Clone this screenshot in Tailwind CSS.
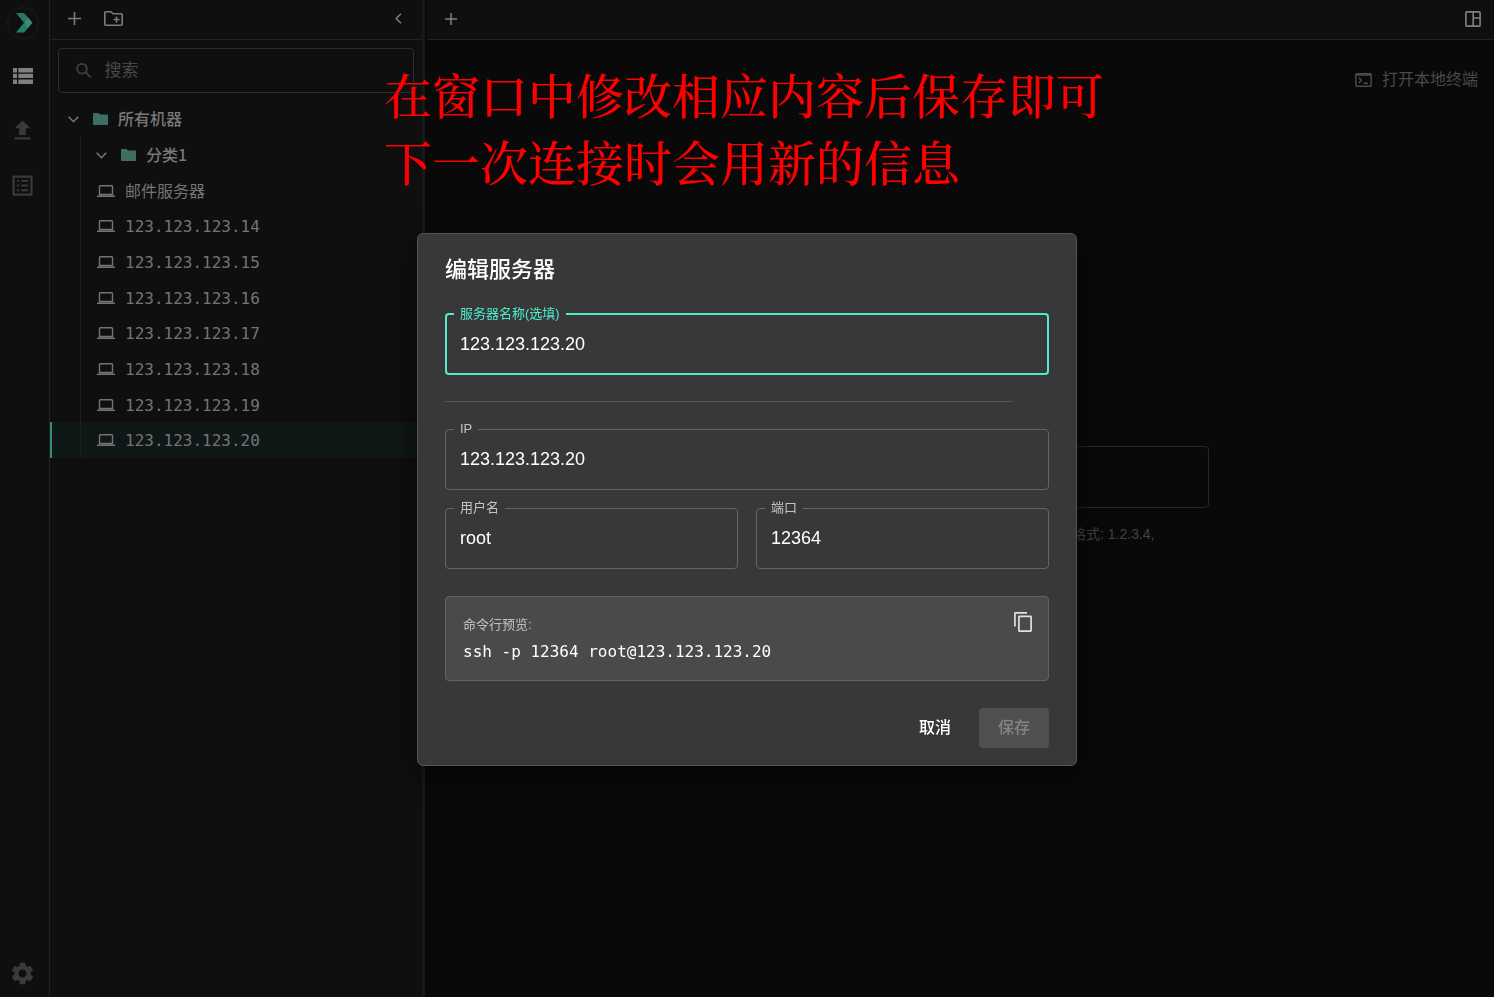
<!DOCTYPE html>
<html lang="zh-CN">
<head>
    <meta charset="UTF-8">
    <meta name="viewport" content="width=device-width, initial-scale=1.0">
    <title>编辑服务器</title>
    <script src="https://cdn.jsdelivr.net/npm/@tailwindcss/browser@4"></script>
</head>
<body class="flex h-screen overflow-hidden bg-[#090909] font-['Liberation_Sans','Noto_Sans_CJK_SC',sans-serif] text-[#787878]">

    <!-- Icon rail -->
    <nav class="flex w-[50px] shrink-0 flex-col items-center border-r border-[#222222] bg-[#0f0f0f] pt-[7px] pb-[10px] pr-1">
        <a href="#" aria-label="主页" class="flex size-8 items-center justify-center rounded-full border border-[#1c1c1c] pl-[3px]">
            <svg class="h-5 w-[18px]" viewBox="0 0 18 20">
                <path d="M1 0h8l4.500 5L9 9.700z" fill="#2c7562"/>
                <path d="M1 19.500h8l4.500-5L9 9.700z" fill="#237f61"/>
                <path d="M13 4.500 17.500 9.700 13 15 9 9.700z" fill="#3d8b77"/>
            </svg>
        </a>
        <button aria-label="服务器列表" class="mt-[23px] flex size-[27px] items-center justify-center text-[#808080]">
            <svg class="h-4 w-5" viewBox="0 0 20 16" fill="currentColor">
                <path d="M0 0h4v4.400H0zM5.300 0H20v4.400H5.300zM0 5.800h4v4.200H0zM5.300 5.800H20V10H5.300zM0 11.500h4V16H0zM5.300 11.500H20V16H5.300z"/>
            </svg>
        </button>
        <button aria-label="上传" class="mt-[28px] text-[#3a3a3a]">
            <svg class="size-[27px]" viewBox="0 0 24 24" fill="currentColor"><path d="M9 16h6v-6h4l-7-7-7 7h4zm-4 2h14v2H5z"/></svg>
        </button>
        <button aria-label="日志" class="mt-[28px] text-[#3a3a3a]">
            <svg class="size-[27px]" viewBox="0 0 24 24" fill="currentColor"><path d="M19 5v14H5V5h14m1.100-2H3.900c-.5 0-.9.4-.9.9v16.200c0 .4.4.9.9.9h16.200c.4 0 .9-.5.9-.9V3.900c0-.5-.5-.9-.9-.9zM11 7h6v1.700h-6zm0 4.200h6v1.700h-6zm0 4.200h6v1.700h-6zM7 7h2v1.700H7zm0 4.200h2v1.700H7zm0 4.200h2v1.700H7z"/></svg>
        </button>
        <button aria-label="设置" class="mt-auto text-[#3a3a3a]">
            <svg class="size-[27px]" viewBox="0 0 24 24" fill="currentColor"><path d="M19.140 12.940c.04-.3.06-.61.06-.94 0-.32-.02-.64-.07-.94l2.030-1.580c.18-.14.23-.41.12-.61l-1.920-3.320c-.12-.22-.37-.29-.59-.22l-2.390.96c-.5-.38-1.030-.7-1.620-.94l-.36-2.540c-.04-.24-.24-.41-.48-.41h-3.840c-.24 0-.43.17-.47.41l-.36 2.540c-.59.24-1.130.57-1.620.94l-2.390-.96c-.22-.08-.47 0-.59.22L2.740 8.870c-.12.21-.08.47.12.61l2.030 1.580c-.05.3-.09.63-.09.94s.02.64.07.94l-2.030 1.580c-.18.14-.23.41-.12.61l1.920 3.320c.12.22.37.29.59.22l2.390-.96c.5.38 1.030.7 1.620.94l.36 2.540c.05.24.24.41.48.41h3.840c.24 0 .44-.17.47-.41l.36-2.540c.59-.24 1.130-.56 1.620-.94l2.390.96c.22.08.47 0 .59-.22l1.920-3.320c.12-.22.07-.47-.12-.61l-2.010-1.580zM12 15.600c-1.980 0-3.600-1.620-3.600-3.600s1.620-3.600 3.600-3.600 3.600 1.620 3.600 3.600-1.620 3.600-3.600 3.600z"/></svg>
        </button>
    </nav>

    <!-- Server tree -->
    <aside class="flex w-[375px] shrink-0 flex-col border-r-[3px] border-[#191919] bg-[#0f0f0f]">
        <header class="flex h-10 items-center border-b border-[#222222] px-4 pb-[2px] text-[#7c7c7c]">
            <button aria-label="新建服务器" class="flex w-4 justify-center">
                <svg class="size-[13px]" viewBox="0 0 13 13" stroke="currentColor" stroke-width="1.600"><path d="M6.500 0v13M0 6.500h13"/></svg>
            </button>
            <button aria-label="新建分类" class="ml-[22px]">
                <svg class="h-[15px] w-[19px]" viewBox="0 0 19 15" fill="none" stroke="currentColor" stroke-width="1.600"><path d="M.8 1.800q0-1 1-1H7l2 2h8.200q1 0 1 1v9.400q0 1-1 1H1.800q-1 0-1-1zM12.500 5.500v6M9.500 8.500h6"/></svg>
            </button>
            <button aria-label="收起" class="ml-auto flex w-4 justify-center">
                <svg class="h-[11px] w-[7px]" viewBox="0 0 7 11" fill="none" stroke="currentColor" stroke-width="1.500"><path d="M6 .8 1.200 5.500 6 10.200"/></svg>
            </button>
        </header>

        <label class="mx-2 mt-2 flex h-[45px] items-center gap-[13px] rounded border border-[#2c2c2c] pl-[17px] text-[#404040]">
            <svg class="size-[17px]" viewBox="0 0 17 17" fill="none" stroke="currentColor" stroke-width="2"><circle cx="6.500" cy="6.500" r="5.300"/><path d="m10.300 10.300 5.700 5.700"/></svg>
            <input type="search" placeholder="搜索" aria-label="搜索" class="w-full min-w-0 bg-transparent text-[17px] outline-none placeholder:text-[#484848]">
        </label>

        <div class="mt-2 text-base">
            <div class="flex h-9 items-center pl-[18px] font-medium">
                <svg class="h-[7px] w-[11px]" viewBox="0 0 11 7" fill="none" stroke="currentColor" stroke-width="1.500"><path d="m.7.7 4.800 5 4.800-5"/></svg>
                <svg class="ml-[14px] h-3 w-[15px] text-[#3f6f64]" viewBox="0 0 15 12" fill="currentColor"><path d="M0 1q0-1 1-1h4.500l1.500 1.500h7q1 0 1 1V11q0 1-1 1H1q-1 0-1-1z"/></svg>
                <span class="ml-[10px] pb-[2px] font-['Noto_Sans_CJK_SC',sans-serif]">所有机器</span>
            </div>
            <div class="relative before:absolute before:inset-y-0 before:left-[30px] before:w-px before:bg-[#1e1e1e]">
                <div class="flex h-9 items-center pl-[46px] font-medium">
                    <svg class="h-[7px] w-[11px]" viewBox="0 0 11 7" fill="none" stroke="currentColor" stroke-width="1.500"><path d="m.7.7 4.800 5 4.800-5"/></svg>
                    <svg class="ml-[14px] h-3 w-[15px] text-[#3f6f64]" viewBox="0 0 15 12" fill="currentColor"><path d="M0 1q0-1 1-1h4.500l1.500 1.500h7q1 0 1 1V11q0 1-1 1H1q-1 0-1-1z"/></svg>
                    <span class="ml-[10px] pb-[2px] font-['Noto_Sans_CJK_SC',sans-serif]">分类1</span>
                </div>
                <ul class="grid h-[285px] auto-rows-fr font-['DejaVu_Sans_Mono','Noto_Sans_CJK_SC',monospace] text-[#747474]">
                    <li class="flex items-center gap-[10px] border-l-2 border-transparent pl-[45px]">
                        <svg class="h-3 w-[18px] shrink-0" viewBox="0 0 18 12" fill="none" stroke="currentColor" stroke-width="1.400"><path d="M2.500 9.500v-8q0-.8.8-.8h11.400q.8 0 .8.8v8zM0 11.300h18"/></svg>
                        <span class="pt-[2px]">邮件服务器</span>
                    </li>
                    <li class="flex items-center gap-[10px] border-l-2 border-transparent pl-[45px]">
                        <svg class="h-3 w-[18px] shrink-0" viewBox="0 0 18 12" fill="none" stroke="currentColor" stroke-width="1.400"><path d="M2.500 9.500v-8q0-.8.8-.8h11.400q.8 0 .8.8v8zM0 11.300h18"/></svg>
                        <span class="pt-[2px]">123.123.123.14</span>
                    </li>
                    <li class="flex items-center gap-[10px] border-l-2 border-transparent pl-[45px]">
                        <svg class="h-3 w-[18px] shrink-0" viewBox="0 0 18 12" fill="none" stroke="currentColor" stroke-width="1.400"><path d="M2.500 9.500v-8q0-.8.8-.8h11.400q.8 0 .8.8v8zM0 11.300h18"/></svg>
                        <span class="pt-[2px]">123.123.123.15</span>
                    </li>
                    <li class="flex items-center gap-[10px] border-l-2 border-transparent pl-[45px]">
                        <svg class="h-3 w-[18px] shrink-0" viewBox="0 0 18 12" fill="none" stroke="currentColor" stroke-width="1.400"><path d="M2.500 9.500v-8q0-.8.8-.8h11.400q.8 0 .8.8v8zM0 11.300h18"/></svg>
                        <span class="pt-[2px]">123.123.123.16</span>
                    </li>
                    <li class="flex items-center gap-[10px] border-l-2 border-transparent pl-[45px]">
                        <svg class="h-3 w-[18px] shrink-0" viewBox="0 0 18 12" fill="none" stroke="currentColor" stroke-width="1.400"><path d="M2.500 9.500v-8q0-.8.8-.8h11.400q.8 0 .8.8v8zM0 11.300h18"/></svg>
                        <span class="pt-[2px]">123.123.123.17</span>
                    </li>
                    <li class="flex items-center gap-[10px] border-l-2 border-transparent pl-[45px]">
                        <svg class="h-3 w-[18px] shrink-0" viewBox="0 0 18 12" fill="none" stroke="currentColor" stroke-width="1.400"><path d="M2.500 9.500v-8q0-.8.8-.8h11.400q.8 0 .8.8v8zM0 11.300h18"/></svg>
                        <span class="pt-[2px]">123.123.123.18</span>
                    </li>
                    <li class="flex items-center gap-[10px] border-l-2 border-transparent pl-[45px]">
                        <svg class="h-3 w-[18px] shrink-0" viewBox="0 0 18 12" fill="none" stroke="currentColor" stroke-width="1.400"><path d="M2.500 9.500v-8q0-.8.8-.8h11.400q.8 0 .8.8v8zM0 11.300h18"/></svg>
                        <span class="pt-[2px]">123.123.123.19</span>
                    </li>
                    <li class="flex items-center gap-[10px] border-l-2 border-[#2f8d76] bg-[#101717] pl-[45px]">
                        <svg class="h-3 w-[18px] shrink-0" viewBox="0 0 18 12" fill="none" stroke="currentColor" stroke-width="1.400"><path d="M2.500 9.500v-8q0-.8.8-.8h11.400q.8 0 .8.8v8zM0 11.300h18"/></svg>
                        <span class="pt-[2px]">123.123.123.20</span>
                    </li>
                </ul>
            </div>
        </div>
    </aside>

    <!-- Main area -->
    <main class="flex min-w-0 grow flex-col">
        <header class="ml-[2px] flex h-10 shrink-0 items-center justify-between border-b border-[#222222] bg-[#0f0f0f] pr-[13px] pb-[2px] pl-[18px] text-[#808080]">
            <button aria-label="新建标签">
                <svg class="size-3" viewBox="0 0 12 12" stroke="currentColor" stroke-width="1.500"><path d="M6 0v12M0 6h12"/></svg>
            </button>
            <button aria-label="布局">
                <svg class="size-4" viewBox="0 0 16 16" fill="none" stroke="currentColor" stroke-width="1.600"><path d="M1.800.9h12.400q.9 0 .9.900v12.400q0 .9-.9.900H1.800q-.9 0-.9-.9V1.800q0-.9.9-.9zM8.200.9v14.200M8.200 7h6.900"/></svg>
            </button>
        </header>
        <button class="mt-[28px] mr-4 flex h-6 items-center gap-[10px] self-end text-base text-[#4a4a4a]">
            <svg class="h-[14px] w-[17px]" viewBox="0 0 17 14" fill="none" stroke="currentColor" stroke-width="1.500"><path d="M1.800.8h13.400q1 0 1 1v10.400q0 1-1 1H1.800q-1 0-1-1V1.800q0-1 1-1zM.8 2h15.400M3.800 4.700l2.600 2.600-2.600 2.600M8.500 10.200h4.500"/></svg>
            打开本地终端
        </button>
        <div class="mt-[354px] w-[498px] self-center">
            <input type="text" aria-label="服务器地址" class="h-[62px] w-full rounded border border-[#272727] bg-transparent px-4 text-lg">
            <p class="mt-4 pr-[54px] text-right text-sm text-[#424242]">格式: 1.2.3.4,</p>
        </div>
    </main>

    <!-- Edit dialog -->
    <div class="fixed inset-0 flex items-center justify-center pt-[2px]">
        <form role="dialog" aria-labelledby="dialogTitle" class="w-[660px] rounded-md border border-[#555555] bg-[#383838] px-[27px] pt-5 pb-[17px] text-white shadow-[0_10px_30px_rgba(0,0,0,0.6)]">
            <h1 id="dialogTitle" class="text-[22px] leading-8 font-medium">编辑服务器</h1>

            <fieldset class="mt-[19px] rounded border-2 border-[#50ecd0] pb-2">
                <legend class="ml-[7px] px-[6px] text-[13px] leading-[18px] text-[#50ecd0]"><label for="serverName">服务器名称(选填)</label></legend>
                <input id="serverName" type="text" value="123.123.123.20" class="block h-[42px] w-full bg-transparent px-[13px] text-lg outline-none">
            </fieldset>

            <hr class="mt-[26px] mr-9 border-[#555555]">

            <fieldset class="mt-[18px] rounded border border-[#646464] pb-[9px]">
                <legend class="ml-2 px-[6px] text-[13px] leading-[18px] text-[#c4c4c4]"><label for="serverIp">IP</label></legend>
                <input id="serverIp" type="text" value="123.123.123.20" class="block h-[42px] w-full bg-transparent px-[14px] text-lg outline-none">
            </fieldset>

            <div class="mt-[9px] grid grid-cols-2 gap-[18px]">
                <fieldset class="rounded border border-[#646464] pb-[9px]">
                    <legend class="ml-2 px-[6px] text-[13px] leading-[18px] text-[#c4c4c4]"><label for="userName">用户名</label></legend>
                    <input id="userName" type="text" value="root" class="block h-[42px] w-full bg-transparent px-[14px] text-lg outline-none">
                </fieldset>
                <fieldset class="rounded border border-[#646464] pb-[9px]">
                    <legend class="ml-2 px-[6px] text-[13px] leading-[18px] text-[#c4c4c4]"><label for="port">端口</label></legend>
                    <input id="port" type="text" value="12364" class="block h-[42px] w-full bg-transparent px-[14px] text-lg outline-none">
                </fieldset>
            </div>

            <div class="mt-[27px] flex items-start justify-between rounded border border-[#626262] bg-[#4a4a4a] pt-[15px] pr-4 pb-[18px] pl-[17px]">
                <div class="pt-[3px]">
                    <p class="text-[13px] leading-5 text-[#c0c0c0]">命令行预览:</p>
                    <p class="mt-[7px] font-['DejaVu_Sans_Mono',monospace] text-base leading-5">ssh -p 12364 root@123.123.123.20</p>
                </div>
                <button type="button" aria-label="复制" class="text-[#e0e0e0]">
                    <svg class="h-5 w-[18px]" viewBox="0 0 18 20" fill="none" stroke="currentColor" stroke-width="1.700"><path d="M.9 14.500V1.400q0-.5.5-.5H13"/><rect x="4.900" y="4.300" width="12.200" height="14.800" rx=".5"/></svg>
                </button>
            </div>

            <div class="mt-[27px] flex justify-end gap-[9px] text-base font-medium">
                <button type="button" class="h-10 w-[70px] rounded">取消</button>
                <button type="submit" disabled class="h-10 w-[70px] rounded bg-[#505050] text-[#858585]">保存</button>
            </div>
        </form>
    </div>

    <!-- Note written over the window -->
    <p class="absolute top-[60px] left-[384px] font-['Noto_Serif_CJK_SC','Liberation_Serif','Noto_Sans_CJK_SC',serif] text-5xl leading-[67px] font-medium text-[#ff0000]">在窗口中修改相应内容后保存即可<br>下一次连接时会用新的信息</p>
</body>
</html>
